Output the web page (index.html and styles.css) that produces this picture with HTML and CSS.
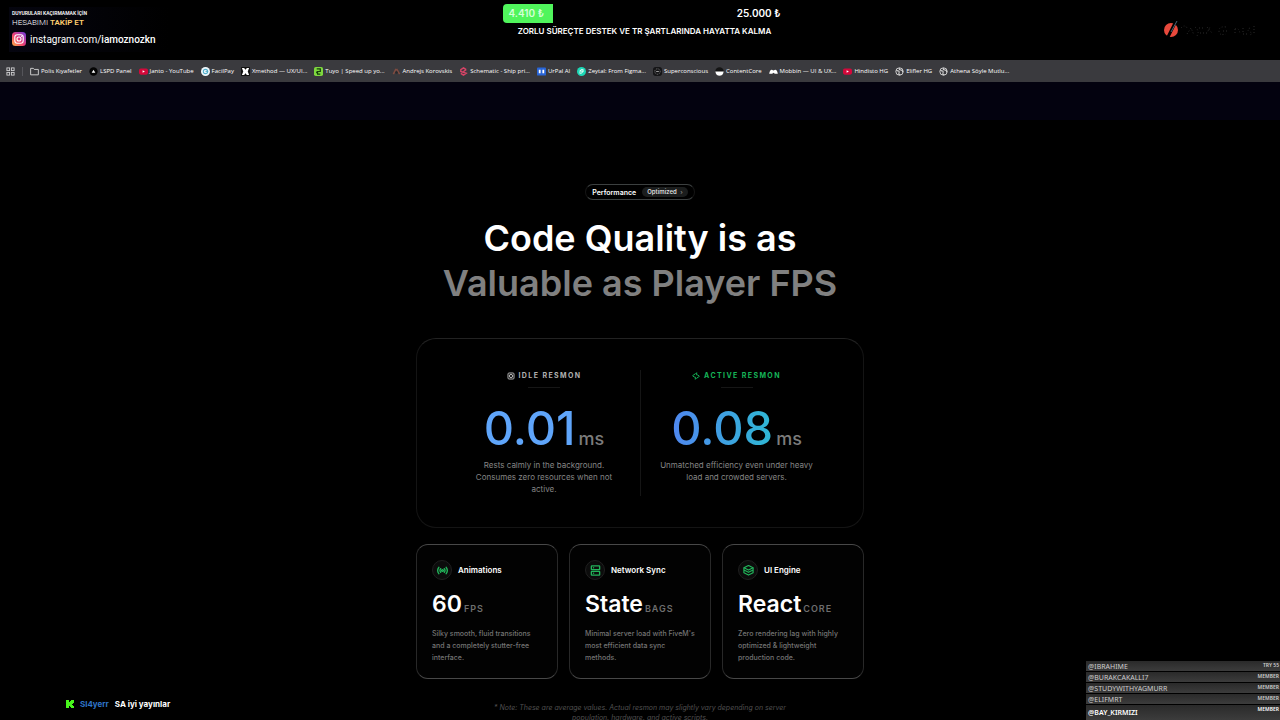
FILE: index.html
```html
<!DOCTYPE html>
<html lang="en">
<head>
    <meta charset="UTF-8">
    <meta name="viewport" content="width=device-width, initial-scale=1.0">
    <title>Performance</title>
    <link rel="stylesheet" href="styles.css">
</head>
<body>

<!-- Stream header -->
<header class="stream-header">
    <div class="follow">
        <div class="follow-small">DUYURULARI KAÇIRMAMAK İÇİN</div>
        <div class="follow-title">HESABIMI <b>TAKİP ET</b></div>
        <a class="follow-link" href="#">
            <svg class="insta" viewBox="0 0 14 14">
                <defs>
                    <linearGradient id="insta" x1="0" y1="1" x2="1" y2="0">
                        <stop offset="0" stop-color="#fdb440"/>
                        <stop offset="0.45" stop-color="#ee3f72"/>
                        <stop offset="1" stop-color="#6a3be0"/>
                    </linearGradient>
                </defs>
                <rect width="14" height="14" rx="3.5" fill="url(#insta)"/>
                <rect x="2.8" y="2.8" width="8.4" height="8.4" rx="2.4" fill="none" stroke="#fff" stroke-width="1.1"/>
                <circle cx="7" cy="7" r="2" fill="none" stroke="#fff" stroke-width="1.1"/>
                <circle cx="9.6" cy="4.5" r="0.6" fill="#fff"/>
            </svg>
            <span>instagram.com/<b>iamoznozkn</b></span>
        </a>
    </div>
    <div class="goal">
        <div class="goal-bar">
            <span class="goal-now">4.410 ₺</span>
            <span class="goal-total">25.000 ₺</span>
        </div>
        <div class="goal-label">ZORLU SÜREÇTE DESTEK VE TR ŞARTLARINDA HAYATTA KALMA</div>
    </div>
    <svg class="sponsor" viewBox="0 0 96 20">
        <circle cx="8" cy="10" r="7" fill="#e8493c"/>
        <path d="M4 19 13 1" stroke="#000" stroke-width="3"/>
        <path d="M8 12 14 1" stroke="#5a7d96" stroke-width="0.8"/>
        <g fill="none" stroke="#2b2b2b" stroke-width="1" stroke-dasharray="1 2">
            <path d="M18 8q4-4 6 0M24 14l4-6 3 7M32 7q5 4 2 9M36 8h6M37 13h7l3-6M44 7l5 6"/>
            <path d="M63 7q-7-1-7 4t7 3M60 11h5M72 9v6M72 9q4-2 5 5M80 8v6h4M87 8q-4 2 0 4t-1 3M91 6v8"/>
        </g>
    </svg>
</header>

<!-- Bookmarks -->
<nav class="bookmarks">
    <svg class="apps" viewBox="0 0 10 10" fill="none" stroke="#d0d0d2"><rect x="1" y="1" width="3" height="3"/><rect x="6" y="1" width="3" height="3"/><rect x="1" y="6" width="3" height="3"/><rect x="6" y="6" width="3" height="3"/></svg>
    <a href="#"><svg viewBox="0 0 10 10"><path d="M.7 1.5h3l1 1.2h4.6v6H.7z" fill="none" stroke="#d8d8d8"/></svg>Polis Kıyafetler</a>
    <a href="#"><svg viewBox="0 0 10 10"><circle cx="5" cy="5" r="4.6" fill="#050505"/><path d="M5 3 7 6.5H3z" fill="#fff"/></svg>LSPD Panel</a>
    <a href="#"><svg viewBox="0 0 10 10"><rect y="1.7" width="10" height="6.8" rx="2" fill="#d3093b"/><path d="M4 3.7 6.5 5 4 6.4z" fill="#fff"/></svg>Janto - YouTube</a>
    <a href="#"><svg viewBox="0 0 10 10"><circle cx="5" cy="5" r="5" fill="#eef7fb"/><circle cx="5" cy="5" r="2.4" fill="none" stroke="#53aeca" stroke-width="1.2"/><path d="M5 5h3" stroke="#53aeca"/></svg>FacilPay</a>
    <a href="#"><svg viewBox="0 0 10 10"><rect width="10" height="10" rx="1" fill="#111"/><path d="M1 1h2.5L5 3l1.5-2H9L7.5 5 9 9H6.5L5 7 3.5 9H1l1.5-4z" fill="#fff"/></svg>Xmethod — UX/UI...</a>
    <a href="#"><svg viewBox="0 0 10 10"><rect width="10" height="10" rx="2" fill="#7ed83e"/><path d="M3 2h4v3H4v3h3M3 5v2" fill="none" stroke="#14400a" stroke-width="1.3"/></svg>Tuyo | Speed up yo...</a>
    <a href="#"><svg viewBox="0 0 10 10"><path d="M1.5 8 4.5 2M5 2l3.5 6" stroke="#7e4b40" stroke-width="1.8"/><circle cx="5" cy="6" r="1.4" fill="#28282b"/></svg>Andrejs Korovskis</a>
    <a href="#"><svg viewBox="0 0 10 10"><path d="M8 3 5 1 2 3v2l6 2-3 2-3-2M8 3 5 5" fill="none" stroke="#d74467" stroke-width="1.6"/></svg>Schematic - Ship pri...</a>
    <a href="#"><svg viewBox="0 0 10 10"><rect y="0.5" width="10" height="9" rx="1" fill="#2865d8"/><path d="M3 3v4M7 3v4" stroke="#fff" stroke-width="2"/></svg>UrPal AI</a>
    <a href="#"><svg viewBox="0 0 10 10"><circle cx="5" cy="5" r="5" fill="#1cd8b6"/><path d="M7.5 3.5Q5 1.5 3 4.5h4Q5 8.5 2.5 6.5" fill="none" stroke="#fff" stroke-width="1.1"/></svg>Zeytal: From Figma...</a>
    <a href="#"><svg viewBox="0 0 10 10"><rect width="10" height="10" rx="3" fill="#151517"/><circle cx="5" cy="5" r="3" fill="none" stroke="#858585" stroke-dasharray="1 1"/><path d="M3.5 5h3" stroke="#aaa"/></svg>Superconscious</a>
    <a href="#"><svg viewBox="0 0 10 10"><circle cx="5" cy="5" r="4.7" fill="#151515"/><path d="M.3 5h9.4Q9 9.7 5 9.7T.3 5z" fill="#fff"/></svg>ContentCore</a>
    <a href="#"><svg viewBox="0 0 10 10"><path d="M.2 7.5Q1 2.8 3.2 3L5 4l1.8-1Q9 2.8 9.8 7.5H6.5L5 6.4 3.5 7.5z" fill="#fff"/></svg>Mobbin — UI &amp; UX...</a>
    <a href="#"><svg viewBox="0 0 10 10"><rect y="1.7" width="10" height="6.8" rx="2" fill="#d3093b"/><path d="M4 3.7 6.5 5 4 6.4z" fill="#fff"/></svg>Hindisto HG</a>
    <a href="#"><svg viewBox="0 0 10 10"><circle cx="5" cy="5" r="4.1" fill="none" stroke="#d8d8d8"/><path d="M1.5 4q4 0 3 2.5T6 8.5M5 1q-1 2 1.5 2.4T8.5 6" fill="none" stroke="#d8d8d8" stroke-width="1.2"/></svg>Elifler HG</a>
    <a href="#"><svg viewBox="0 0 10 10"><circle cx="5" cy="5" r="4.1" fill="none" stroke="#d8d8d8"/><path d="M1.5 4q4 0 3 2.5T6 8.5M5 1q-1 2 1.5 2.4T8.5 6" fill="none" stroke="#d8d8d8" stroke-width="1.2"/></svg>Athena Söyle Mutlu...</a>
</nav>
<div class="page-top"></div>

<!-- Performance -->
<main class="performance">
    <a class="pill" href="#">Performance <span class="pill-tag">Optimized <i>›</i></span></a>
    <h1 class="title">Code Quality is as <span>Valuable as Player FPS</span></h1>

    <section class="resmon">
        <div class="resmon-col">
            <h2 class="resmon-label">
                <svg viewBox="0 0 24 24" fill="none" stroke="currentColor" stroke-width="3"><rect x="3" y="3" width="18" height="18" rx="3"/><circle cx="12" cy="12" r="5"/><path d="M7 7h.1M17 7h.1M7 17h.1M17 17h.1M12 11v2"/></svg>
                IDLE RESMON
            </h2>
            <div class="resmon-value"><span class="num idle">0.01</span><span class="unit">ms</span></div>
            <p>Rests calmly in the background. Consumes zero resources when not active.</p>
        </div>
        <div class="resmon-col">
            <h2 class="resmon-label active">
                <svg viewBox="0 0 24 24" fill="none" stroke="currentColor" stroke-width="2.8" stroke-linejoin="round"><path d="M14 2 9 7H6l-4 5 5 3h3v7l5-5h3l4-5-5-3h-3z"/></svg>
                ACTIVE RESMON
            </h2>
            <div class="resmon-value"><span class="num">0.08</span><span class="unit">ms</span></div>
            <p>Unmatched efficiency even under heavy load and crowded servers.</p>
        </div>
    </section>

    <section class="cards">
        <article class="card">
            <h3><span class="card-icon"><svg viewBox="0 0 24 24" fill="none" stroke="currentColor" stroke-width="3" stroke-linecap="round"><circle cx="12" cy="12" r="2"/><path d="M8 8q-3 4 0 8M16 8q3 4 0 8M4 5q-5 7 0 14M20 5q5 7 0 14"/></svg></span>Animations</h3>
            <div class="card-value">60<small>FPS</small></div>
            <p>Silky smooth, fluid transitions and a completely stutter-free interface.</p>
        </article>
        <article class="card">
            <h3><span class="card-icon"><svg viewBox="0 0 24 24" fill="none" stroke="currentColor" stroke-width="3"><rect x="3" y="2" width="18" height="8" rx="1"/><rect x="3" y="14" width="18" height="8" rx="1"/><path d="M7 6h2M7 18h2"/></svg></span>Network Sync</h3>
            <div class="card-value">State<small>BAGS</small></div>
            <p>Minimal server load with FiveM's most efficient data sync methods.</p>
        </article>
        <article class="card">
            <h3><span class="card-icon"><svg viewBox="0 0 24 24" fill="none" stroke="currentColor" stroke-width="2.6" stroke-linejoin="round"><path d="m12 1 10 5-10 5L2 6z"/><path d="M2 6v5l10 5 10-5V6M2 11v6l10 5 10-5v-6"/></svg></span>UI Engine</h3>
            <div class="card-value">React<small>CORE</small></div>
            <p>Zero rendering lag with highly optimized &amp; lightweight production code.</p>
        </article>
    </section>

    <p class="note">* Note: These are average values. Actual resmon may slightly vary depending on server population, hardware, and active scripts.</p>
</main>

<!-- Chat message -->
<div class="chat">
    <svg viewBox="0 0 8 8"><path d="M0 0h3v2h1V1h1V0h3v3H7v1H6v1h1v1h1v2H5V7H4V6H3v2H0z" fill="#48f51c"/></svg>
    <span class="chat-user">Sl4yerr</span>
    <span>SA iyi yayınlar</span>
</div>

<!-- Members -->
<ul class="members">
    <li>@IBRAHIME <span>TRY 55</span></li>
    <li>@BURAKCAKALLI7 <span>MEMBER</span></li>
    <li>@STUDYWITHYAGMURR <span>MEMBER</span></li>
    <li>@ELIFMRT <span>MEMBER</span></li>
    <li class="latest">@BAY_KIRMIZI <span>MEMBER</span></li>
</ul>

</body>
</html>
```

FILE: styles.css
```css
* {
    box-sizing: border-box;
}

body {
    margin: 0;
    height: 100vh;
    overflow: hidden;
    background: #000;
    color: #fff;
    font-family: Inter, sans-serif;
}

a {
    color: inherit;
    text-decoration: none;
}

h1, h2, h3, p, ul {
    margin: 0;
    padding: 0;
}

/* Stream header */
.stream-header {
    display: grid;
    grid-template-columns: 1fr 284px 1fr;
    height: 60px;
    padding-left: 9px;
}

.follow {
    align-self: start;
    width: 160px;
    margin-top: 7px;
    padding: 3px;
    background: linear-gradient(90deg, #05050f, #000);
    font-family: Roboto, sans-serif;
}

.follow-small {
    font-size: 5px;
    font-weight: 600;
    line-height: 7px;
}

.follow-title {
    font-size: 8px;
    font-weight: 300;
    line-height: 12px;
}

.follow-title b {
    color: #ffce70;
    font-weight: 600;
}

.follow-link {
    display: flex;
    align-items: center;
    gap: 4px;
    height: 20px;
    font-size: 10px;
    white-space: nowrap;
}

.follow-link b {
    font-weight: 500;
}

.insta {
    width: 14px;
    height: 14px;
}

.goal {
    padding-top: 4px;
    font-weight: 600;
    text-align: center;
}

.goal-bar {
    display: flex;
    justify-content: space-between;
    font-size: 10px;
    line-height: 19px;
}

.goal-now {
    width: 50px;
    border-radius: 4px 0 0 4px;
    background: #50f55c;
    color: #d5ffd8;
    padding-left: 6px;
    text-align: left;
}

.goal-total {
    padding-right: 6px;
}

.goal-label {
    font-size: 8px;
    line-height: 16px;
    white-space: nowrap;
}

.sponsor {
    width: 96px;
    height: 20px;
    margin: 20px 21px 0 auto;
}

/* Bookmarks */
.bookmarks {
    display: flex;
    align-items: center;
    gap: 7px;
    height: 22px;
    padding-left: 6px;
    background: #3a3a3e;
    color: #fff;
    font-family: "Open Sans", sans-serif;
    font-size: 6px;
    font-weight: 400;
    white-space: nowrap;
}

.bookmarks a {
    display: flex;
    align-items: center;
    gap: 2px;
}

.bookmarks svg {
    width: 9px;
    height: 9px;
}

.bookmarks .apps {
    width: 17px;
    padding-right: 7px;
    border-right: 1px solid #55555a;
}

.page-top {
    height: 38px;
    background: #03020f;
}

/* Performance */
.performance {
    display: flex;
    flex-direction: column;
    align-items: center;
    max-width: 448px;
    margin: 0 auto;
    padding-top: 64px;
}

.pill {
    display: flex;
    align-items: center;
    gap: 6px;
    height: 16px;
    padding: 0 6px;
    border: 1px solid #151515;
    border-top-color: #3c4040;
    border-bottom-color: #3c4040;
    border-radius: 8px;
    font-size: 7px;
    font-weight: 600;
}

.pill-tag {
    padding: 0 5px;
    border-radius: 5px;
    background: #1b1d1d;
    color: #ddd;
    font-size: 6px;
    line-height: 10px;
}

.pill-tag i {
    margin-left: 2px;
    color: #888;
    font-style: normal;
}

.title {
    margin-top: 16px;
    font-size: 36px;
    font-weight: 600;
    line-height: 45px;
    text-align: center;
    white-space: nowrap;
}

.title span {
    display: block;
    color: #808080;
}

.resmon {
    display: grid;
    grid-template-columns: 1fr 1fr;
    width: 100%;
    height: 190px;
    margin-top: 32px;
    padding: 31px;
    border: 1px solid #141414;
    border-top-color: #222;
    border-radius: 20px;
}

.resmon-col {
    display: flex;
    flex-direction: column;
    align-items: center;
    text-align: center;
}

.resmon-col + .resmon-col {
    border-left: 1px solid #151515;
}

.resmon-label {
    display: flex;
    align-items: center;
    gap: 4px;
    color: #b0b0b0;
    font-size: 7px;
    font-weight: 700;
    letter-spacing: 0.2em;
    line-height: 12px;
}

.resmon-label svg {
    width: 8px;
    height: 8px;
}

.resmon-label.active {
    color: #16b558;
}

.resmon-value {
    display: flex;
    align-items: baseline;
    gap: 3px;
    margin-top: 5px;
    padding-top: 12px;
    background: linear-gradient(#161616, #161616) top center / 32px 1px no-repeat;
}

.num {
    background: linear-gradient(90deg, #5087f0, #2eb8d4);
    background-clip: text;
    color: transparent;
    font-size: 47px;
    font-weight: 500;
    line-height: 58px;
}

.num.idle {
    background: #5fa5fa;
    background-clip: text;
}

.unit {
    color: #7c7c7c;
    font-size: 18px;
    font-weight: 500;
}

.resmon p {
    max-width: 160px;
    margin-top: 2px;
    color: #858585;
    font-size: 8px;
    line-height: 12px;
}

/* Cards */
.cards {
    display: grid;
    grid-template-columns: repeat(3, 1fr);
    gap: 11px;
    width: 100%;
    margin-top: 16px;
}

.card {
    height: 135px;
    padding: 15px;
    border: 1px solid #282828;
    border-top-color: #484848;
    border-bottom-color: #484848;
    border-radius: 12px;
    background: #020202;
}

.card h3 {
    display: flex;
    align-items: center;
    gap: 6px;
    font-size: 8px;
    font-weight: 600;
}

.card-icon {
    display: grid;
    place-items: center;
    width: 20px;
    height: 20px;
    border: 1px solid #1f1f1f;
    border-radius: 50%;
    background: #0c0c0c;
    color: #22b35a;
}

.card-icon svg {
    width: 11px;
    height: 11px;
}

.card-value {
    margin-top: 9px;
    font-size: 23px;
    font-weight: 600;
    line-height: 30px;
    white-space: nowrap;
}

.card-value small {
    margin-left: 2px;
    color: #6e6e6e;
    font-size: 9px;
    letter-spacing: 1px;
}

.card p {
    margin-top: 4px;
    color: #747474;
    font-size: 7px;
    font-weight: 500;
    line-height: 12px;
}

.note {
    max-width: 320px;
    margin-top: 24px;
    color: #505050;
    font-size: 7px;
    font-style: italic;
    line-height: 10px;
    text-align: center;
}

/* Chat message */
.chat {
    position: absolute;
    bottom: 10px;
    left: 66px;
    display: flex;
    align-items: center;
    gap: 6px;
    font-size: 8px;
    font-weight: 700;
    line-height: 12px;
}

.chat svg {
    width: 8px;
    height: 8px;
}

.chat-user {
    color: #2f75c8;
}

/* Members */
.members {
    position: absolute;
    right: 0;
    bottom: 0;
    width: 194px;
    list-style: none;
    font-family: "Noto Sans", sans-serif;
}

.members li {
    display: flex;
    justify-content: space-between;
    height: 10px;
    margin-bottom: 1px;
    padding: 0 1px 0 2px;
    background: linear-gradient(#2a2a2a, #3c3c3c);
    color: #ccc;
    font-size: 7px;
    line-height: 11px;
}

.members span {
    font-size: 5px;
    font-weight: 600;
    line-height: 8px;
}

.members .latest {
    height: 15px;
    margin-bottom: 0;
    color: #fff;
    font-weight: 600;
    line-height: 15px;
}
```
